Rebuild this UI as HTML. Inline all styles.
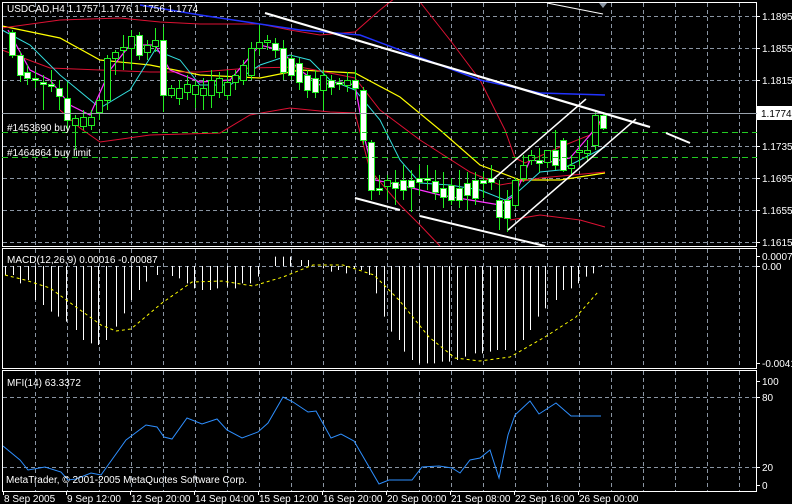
<!DOCTYPE html>
<html><head><meta charset="utf-8"><style>
html,body{margin:0;padding:0;background:#000;width:792px;height:504px;overflow:hidden}
svg{display:block}
text{font-family:"Liberation Sans",sans-serif;font-size:10px;fill:#fff}
</style></head><body>
<svg id="s" width="792" height="504" xmlns="http://www.w3.org/2000/svg">
<g id="grid" stroke="#8a95a3" stroke-width="1" stroke-dasharray="4,3" fill="none"></g>
<g id="ind"></g>
<g id="lines" fill="none"></g>
<g id="cand"></g>
<g fill="none" stroke="#fff" stroke-width="1">
<rect x="2.5" y="2.5" width="754" height="244"/>
<rect x="2.5" y="248.5" width="754" height="120"/>
<rect x="2.5" y="370.5" width="754" height="121"/>
</g>
<line x1="2" y1="113.5" x2="757" y2="113.5" stroke="#9aa3ad"/>
<line x1="2" y1="132.5" x2="757" y2="132.5" stroke="#22cc22" stroke-dasharray="6,4"/>
<line x1="2" y1="157.5" x2="757" y2="157.5" stroke="#22cc22" stroke-dasharray="6,4"/>
<g stroke="#fff" fill="none">
<line x1="265" y1="13" x2="650" y2="127" stroke-width="2.2"/>
<line x1="355" y1="198" x2="400" y2="210" stroke-width="2"/>
<line x1="420" y1="216" x2="545" y2="246" stroke-width="2"/>
<line x1="490" y1="182" x2="586" y2="99" stroke-width="1.5"/>
<line x1="508" y1="230" x2="636" y2="119" stroke-width="1.5"/>
<line x1="666" y1="133" x2="690" y2="143" stroke-width="2"/>
<line x1="547" y1="3" x2="603" y2="14" stroke-width="1"/>
</g>
<polygon points="599,3 607,3 603,8" fill="#8a95a3"/>
<text x="7" y="12">USDCAD,H4  1.1757 1.1776 1.1756 1.1774</text>
<text x="7" y="131">#1453690 buy</text>
<text x="7" y="156">#1464864 buy limit</text>
<text x="7" y="263">MACD(12,26,9) 0.00016 -0.00087</text>
<text x="7" y="386">MFI(14) 63.3372</text>
<text x="6" y="483">MetaTrader, © 2001-2005 MetaQuotes Software Corp.</text>
<g id="axis"></g>
<rect x="757" y="106" width="35" height="14" fill="#fff"/>
<text x="761" y="117" style="fill:#000">1.1774</text>
</svg>
<script>
var NS="http://www.w3.org/2000/svg";
function el(p,t,a){var e=document.createElementNS(NS,t);for(var k in a)e.setAttribute(k,a[k]);document.getElementById(p).appendChild(e);return e;}
// grid
var vx=[35,67,99,131,163,195,227,259,291,323,355,387,419,451,483,515,547,579,611,643,675,707,739];
vx.forEach(function(x){
 el('grid','line',{x1:x+.5,y1:3,x2:x+.5,y2:246});
 el('grid','line',{x1:x+.5,y1:249,x2:x+.5,y2:368});
 el('grid','line',{x1:x+.5,y1:371,x2:x+.5,y2:491});
});
[16,48,80,146,178,210,242].forEach(function(y){el('grid','line',{x1:3,y1:y+.5,x2:756,y2:y+.5});});
[266,397,467].forEach(function(y){el('grid','line',{x1:3,y1:y+.5,x2:756,y2:y+.5});});
// axis labels
var ax=[["1.1895",16],["1.1855",48],["1.1815",80],["1.1735",146],["1.1695",178],["1.1655",210],["1.1615",242],["0.00071",256],["0.00",266],["-0.0041",363],["100",381],["80",397],["20",467],["0",485]];
ax.forEach(function(a){el('axis','line',{x1:757,y1:a[1]+.5,x2:760,y2:a[1]+.5,stroke:'#fff'});var t=el('axis','text',{x:762,y:a[1]+4});t.textContent=a[0];});
var dts=[["8 Sep 2005",3],["9 Sep 12:00",66],["12 Sep 20:00",130],["14 Sep 04:00",194],["15 Sep 12:00",258],["16 Sep 20:00",322],["20 Sep 00:00",386],["21 Sep 08:00",450],["22 Sep 16:00",514],["26 Sep 00:00",578]];
dts.forEach(function(d){el('axis','line',{x1:d[1]+.5,y1:492,x2:d[1]+.5,y2:495,stroke:'#fff'});var t=el('axis','text',{x:d[1]+1,y:502});t.textContent=d[0];});
// lines
function pl(c,w,pts,dash){var a={points:pts,stroke:c,'stroke-width':w};if(dash)a['stroke-dasharray']=dash;el('lines','polyline',a);}
pl('#ffff00',1.2,"2,26 60,38 100,60 150,65 200,75 260,78 300,70 355,73 400,97 440,130 480,165 520,180 560,180 605,173");
pl('#dd1133',1,"2,50 50,68 100,70 150,72 200,72 250,68 300,67 355,78 380,110 420,140 470,172 500,185 540,178 605,172");
pl('#dd1133',1,"2,28 60,20 120,18 160,22 200,24 260,24 290,30 320,35 355,32 380,10 395,-2");
pl('#dd1133',1,"420,2 450,40 480,80 490,100 505,130 515,158 525,163 560,147 590,135 605,118");
pl('#dd1133',1,"60,110 80,128 100,142 150,135 220,133 250,115 290,108 330,112 355,113 370,170 400,205 420,225 440,246");
pl('#dd1133',1,"510,220 540,215 580,220 605,227");
pl('#33dddd',1,"2,30 30,45 60,75 100,108 130,90 155,50 180,60 200,85 230,85 260,65 290,55 310,60 330,80 355,90 380,120 400,160 420,183 450,185 480,190 505,200 520,190 540,172 560,170 580,160 605,147");
pl('#ff33ff',1.2,"8,30 30,70 50,80 70,105 90,115 110,70 130,45 155,45 170,70 200,82 230,80 260,45 280,50 300,70 320,85 340,82 355,85 365,140 375,180 400,185 440,195 470,200 500,205 515,195 530,160 550,162 570,158 590,135 605,115");
pl('#2233ff',1.5,"140,5 200,15 300,30 360,35 400,50 480,80 540,93 605,95");
// candles
var C=[[12,32,55,30,58],[20,55,75,52,82],[27,72,78,65,85],[35,78,80,70,88],[43,82,84,75,110],[51,84,86,70,92],[59,88,96,80,110],[67,98,120,82,130],[75,125,118,115,150],[83,126,117,110,130],[91,125,117,110,130],[99,112,100,98,120],[107,100,58,55,110],[115,58,52,50,75],[123,50,47,35,70],[131,48,36,30,70],[139,35,55,32,60],[147,52,45,40,60],[155,46,40,28,52],[163,40,95,27,112],[171,95,88,85,98],[179,98,88,80,105],[187,92,84,75,100],[195,94,85,80,108],[203,95,88,78,110],[211,95,80,70,108],[219,92,78,72,98],[227,95,82,70,100],[235,82,75,70,90],[243,80,65,60,85],[251,75,48,42,80],[259,48,42,25,55],[267,42,40,35,50],[275,43,50,38,58],[283,48,72,40,80],[291,58,75,55,80],[299,63,82,58,90],[307,75,90,70,98],[315,78,92,70,98],[323,90,75,70,110],[331,80,87,75,95],[339,82,84,78,90],[347,85,80,72,92],[355,80,88,70,100],[363,90,140,87,145],[371,142,190,140,200],[379,188,190,175,195],[387,186,180,175,200],[395,182,188,170,205],[403,180,190,165,200],[411,180,187,170,212],[419,178,182,165,195],[427,178,180,165,190],[435,181,192,170,200],[443,188,197,172,208],[451,185,200,178,205],[459,188,200,170,208],[467,183,195,172,210],[475,180,198,172,205],[483,180,183,172,198],[491,178,182,165,190],[499,200,217,180,230],[507,200,218,190,232],[515,205,180,178,208],[523,178,165,155,182],[531,160,155,150,165],[539,160,163,148,172],[547,162,150,150,168],[555,150,165,130,170],[563,140,170,138,172],[571,168,165,155,175],[579,152,150,138,165],[587,153,150,140,162],[595,145,115,112,150],[603,115,128,112,130]];
C.forEach(function(c){var x=c[0],o=c[1],cl=c[2];var t=Math.min(o,cl),b=Math.max(o,cl);
 el('cand','line',{x1:x+.5,y1:c[3],x2:x+.5,y2:c[4],stroke:'#22ee22'});
 el('cand','rect',{x:x-2.5,y:t+.5,width:6,height:Math.max(1,b-t),fill:(cl>o?'#fff':'#000'),stroke:'#22ee22'});});
// MACD histogram (3x coords)
var H=[[10,75],[25,75],[40,100],[55,90],[70,150],[85,165],[100,185],[115,200],[130,215],[150,240],[165,270],[180,280],[195,285],[210,270],[230,230],[245,190],[260,150],[275,120],[290,95],[310,75],[340,78],[355,85],[370,100],[385,115],[400,120],[415,120],[430,115],[450,110],[465,115],[480,100],[495,100],[510,80],[545,20],[560,20],[575,20],[595,30],[610,30],[640,55],[655,65],[670,60],[685,70],[700,55],[715,60],[730,75],[745,130],[760,200],[775,245],[790,270],[800,305],[815,330],[830,340],[845,340],[860,340],[875,335],[890,335],[905,330],[920,320],[940,310],[955,310],[970,305],[985,300],[1000,300],[1020,300],[1035,270],[1050,240],[1065,200],[1080,175],[1100,150],[1115,120],[1130,115],[1145,100],[1160,80],[1175,70],[1190,45]];
H.forEach(function(h){var x=Math.round(h[0]/1.98)+.5;el('ind','line',{x1:x,y1:266,x2:x,y2:h[1]/3+250,stroke:'#fff'});});
el('ind','polyline',{points:"5,275 25,280 50,288 76,307 101,325 116,331 131,329 162,303 192,282 222,281 253,286 283,277 313,265 343,265 374,275 399,300 429,337 455,358 480,361 510,357 545,337 576,317 598,292",stroke:'#ffff00','stroke-width':1,'stroke-dasharray':'3,3',fill:'none'});
el('ind','polyline',{points:"3,446 20,460 28,470 45,467 61,472 68,480 76,479 91,473 101,475 126,440 146,425 157,427 164,437 172,439 187,418 202,424 217,419 227,430 242,438 258,432 268,423 283,397 293,402 308,412 316,411 331,438 341,434 354,441 379,484 389,480 412,480 422,467 439,466 452,468 460,473 470,460 480,458 490,450 499,478 508,435 515,415 530,401 539,414 556,403 571,416 601,416",stroke:'#2e8fff','stroke-width':1,fill:'none'});
</script>
</body></html>
